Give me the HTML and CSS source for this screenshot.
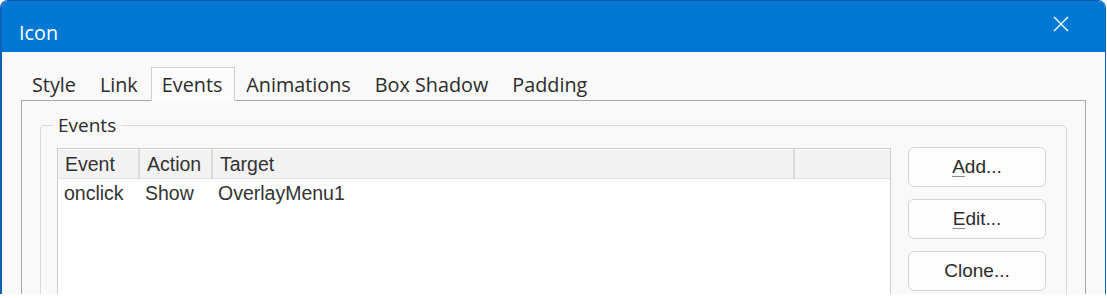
FILE: index.html
```html
<!DOCTYPE html>
<html lang="en">
<head>
    <meta charset="UTF-8">
    <title>Icon</title>
    <link rel="stylesheet" href="styles.css">
</head>
<body>
    <div class="window">
        <div class="titlebar">
            <span class="title">Icon</span>
            <span class="close">
                <svg width="16" height="16" viewBox="0 0 16 16">
                    <path d="M1 1 L15 15 M15 1 L1 15" stroke="#fff" stroke-width="1.4" fill="none"/>
                </svg>
            </span>
        </div>
        <div class="client">
            <div class="tabs">
                <span class="tab">Style</span>
                <span class="tab">Link</span>
                <span class="tab active">Events</span>
                <span class="tab">Animations</span>
                <span class="tab">Box Shadow</span>
                <span class="tab">Padding</span>
            </div>
            <div class="panel">
                <fieldset class="group">
                    <legend>Events</legend>
                    <div class="group_row">
                        <div class="listview">
                            <table>
                                <colgroup>
                                    <col style="width:81px">
                                    <col style="width:73px">
                                    <col style="width:582px">
                                    <col>
                                </colgroup>
                                <thead>
                                    <tr><th>Event</th><th>Action</th><th>Target</th><th></th></tr>
                                </thead>
                                <tbody>
                                    <tr><td>onclick</td><td>Show</td><td>OverlayMenu1</td><td></td></tr>
                                </tbody>
                            </table>
                        </div>
                        <div class="buttons">
                            <a href="#" class="btn"><u>A</u>dd...</a>
                            <a href="#" class="btn"><u>E</u>dit...</a>
                            <a href="#" class="btn">Clone...</a>
                        </div>
                    </div>
                </fieldset>
            </div>
        </div>
    </div>
</body>
</html>
```

FILE: styles.css
```css
body{
    margin: 0;
    background: #ffffff;
}
.window {
    width: 1103px;
    height: 293px;
    overflow: hidden;
    background: #f9f9f9;
    border-left: 2px solid #0b62b8;
    border-right: 1px solid #0b62b8;
    border-top: 1px solid #0b5cab;
    border-radius: 8px 8px 0 0;
    font-family: "Open Sans", "Noto Sans", sans-serif;
    color: #1b1b1b;
}
.titlebar {
    height: 51px;
    background: #0078d4;       /* タイトルバー */
    display: flex;
    justify-content: space-between;
    color: #fff;
}
.title {
    font-size: 19.8px;
    line-height: 20px;
    padding: 22px 0 0 17px;
}
.close {
    padding: 14px 36px 0 0;
}
.client {
    padding: 15px 19px 0 19px;
}
.tabs {
    display: flex;
    position: relative;
    z-index: 1;
}
.tab {
    font-size: 19.8px;
    line-height: 20px;
    padding: 7px 12px 5px 10px;
    border: 1px solid transparent;
    border-bottom: none;
    color: #2b2b2b;
}
.tab.active {
    background: #fcfcfc;
    border-color: #cfcfcf;
    margin-bottom: -1px;
    padding-bottom: 6px;
}
.panel {
    border: 1px solid #a9a9a9;
    border-bottom: none;
    height: 300px;
    padding: 0 18px;
}
.group {
    margin: 15px 0 0 0;
    padding: 13px 20px 0 16px;
    border: 1px solid #d9d9d9;
    border-radius: 4px;
    height: 300px;
}
.group legend {
    font-size: 19px;
    line-height: 19px;
    padding: 0 5px;
    margin-left: -4px;
    color: #2b2b2b;
}
.group_row {
    display: flex;
    gap: 17px;
}
.listview {
    flex: 1;
    height: 300px;
    background: #fff;
    border: 1px solid #cdcdcd;
}
.listview table {
    width: 100%;
    table-layout: fixed;
    border-collapse: collapse;
    font-family: "Liberation Sans", Arial, sans-serif;
    font-size: 19.5px;
    color: #333;
}
.listview th {
    font-weight: normal;
    text-align: left;
    background: #f2f2f2;
    line-height: 27px;
    padding: 2px 0 0 7px;
    border-right: 2px solid #dadada;
    border-bottom: 1px solid #e3e3e3;
    box-shadow: inset 0 1px 0 #fff;
}
.listview th:last-child {
    border-right: none;
}
.listview td {
    line-height: 27px;
    padding: 1px 0 0 6px;
}
.buttons {
    width: 138px;
    display: flex;
    flex-direction: column;
    gap: 12px;
    margin-top: -1px;
}
.btn {
    display: block;
    height: 38px;
    line-height: 38px;
    text-align: center;
    text-decoration: none;
    background: #fdfdfd;
    border: 1px solid #d3d3d3;
    border-radius: 6px;
    font-family: "Liberation Sans", Arial, sans-serif;
    font-size: 19px;
    color: #2b2b2b;
}
.btn u {
    text-decoration-color: #888;
    text-underline-offset: 3px;
}
```
